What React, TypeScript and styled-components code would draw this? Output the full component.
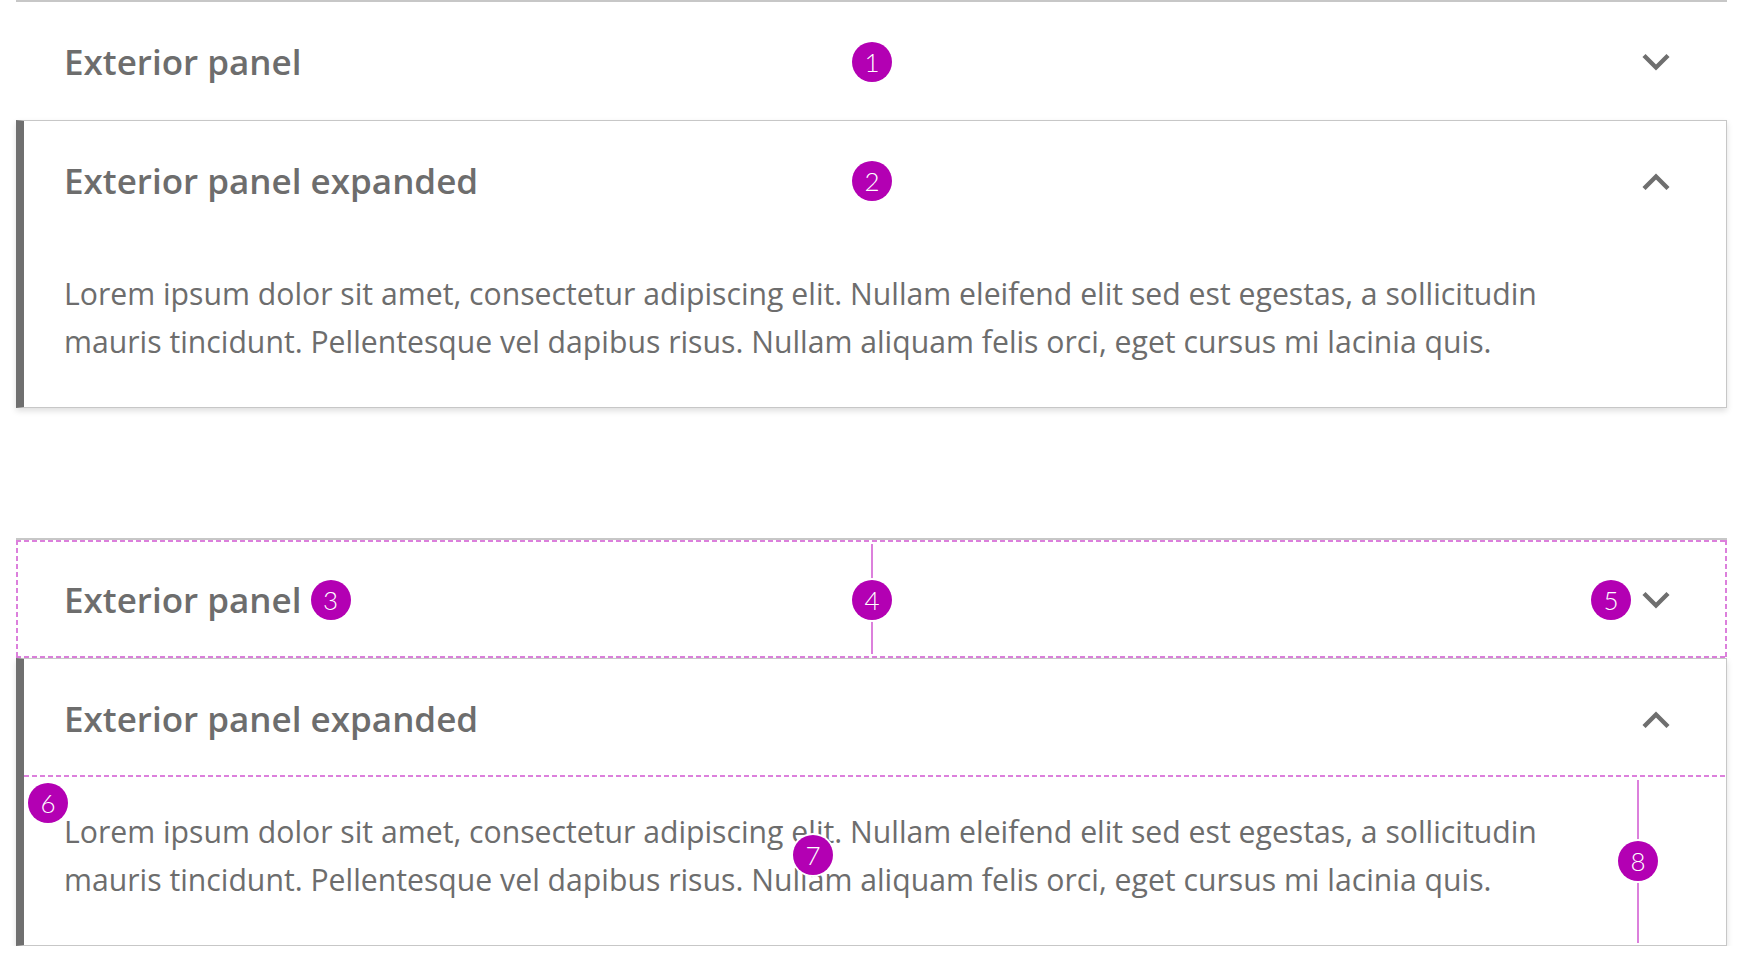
import styled, { createGlobalStyle, css } from "styled-components";

const GlobalStyle = createGlobalStyle`
  body {
    margin: 0;
    background: #ffffff;
    font-family: "Open Sans", "Liberation Sans", sans-serif;
  }
`

const pink = "#dc80dc";
const dashH = `repeating-linear-gradient(90deg, ${pink} 0 5px, transparent 5px 8px)`;
const dashV = `repeating-linear-gradient(180deg, ${pink} 0 5px, transparent 5px 8px)`;

const Page = styled.div`
  padding: 0 17px 0 16px;
  display: flex;
  flex-direction: column;
`
const Group = styled.div`
  display: flex;
  flex-direction: column;
  & + & {
    margin-top: 130px;
  }
`
const Item = styled.div<{ $expanded?: boolean }>`
  position: relative;
  background: #ffffff;
  ${(p) =>
    p.$expanded
      ? css`
          border: 1px solid #c7c7c7;
          border-left: 8px solid #6f6f6f;
          box-shadow: 0 3px 6px rgba(0, 0, 0, 0.13);
        `
      : css`
          border-top: 2px solid #c7c7c7;
        `}
`
const Header = styled.div<{ $expanded?: boolean; $outline?: boolean; $dashedBottom?: boolean }>`
  position: relative;
  display: flex;
  align-items: center;
  height: 118px;
  box-sizing: border-box;
  padding: 1px ${(p) => (p.$expanded ? 55 : 56)}px 0 ${(p) => (p.$expanded ? 40 : 48)}px;
  ${(p) =>
    p.$outline &&
    css`
      background:
        ${dashH} top left / 100% 2px no-repeat,
        ${dashH} bottom left / 100% 2px no-repeat,
        ${dashV} top left / 2px 100% no-repeat,
        ${dashV} top right / 2px 100% no-repeat;
    `}
  ${(p) =>
    p.$dashedBottom &&
    css`
      background: ${dashH} bottom left / 100% 2px no-repeat;
    `}
`
const Title = styled.h3`
  flex: 1;
  margin: 0;
  display: flex;
  align-items: center;
  gap: 9px;
  font-family: "Open Sans", "Liberation Sans", sans-serif;
  font-weight: 600;
  font-size: 35px;
  line-height: 40px;
  color: #6d6d6d;
`
const Toggle = styled.div`
  display: flex;
  align-items: center;
  gap: 10px;
`
const Body = styled.div`
  padding: 31px 60px 41px 40px;
  font-family: "Open Sans", "Liberation Sans", sans-serif;
  font-size: 30.2px;
  line-height: 48px;
  color: #6d6d6d;
`
const Badge = styled.span`
  width: 40px;
  height: 40px;
  flex: none;
  border-radius: 50%;
  background: #b300b3;
  color: #ffffff;
  display: inline-flex;
  align-items: center;
  justify-content: center;
  font-family: Lato, "Liberation Sans", sans-serif;
  font-weight: 300;
  font-size: 26px;
  line-height: 1;
  box-shadow: 0 0 0 2px #ffffff;
`
const Marker = styled(Badge)<{ $x: number; $y: number }>`
  position: absolute;
  left: ${(p) => p.$x}px;
  top: ${(p) => p.$y}px;
  transform: translate(-50%, -50%);
  z-index: 2;
`
const Guide = styled.div<{ $x: number; $top: number; $bottom: number }>`
  position: absolute;
  left: ${(p) => p.$x - 1}px;
  top: ${(p) => p.$top}px;
  bottom: ${(p) => p.$bottom}px;
  width: 2px;
  background: ${pink};
  z-index: 1;
`

function Chevron({ up }: { up?: boolean }) {
  return (
    <svg width="30" height="18" viewBox="0 0 30 18">
      <polyline
        points={up ? "3,16.5 15,4.5 27,16.5" : "3,2.5 15,14.5 27,2.5"}
        fill="none"
        stroke="#6f6f6f"
        strokeWidth="4.4"
      />
    </svg>
  );
}

const lorem1 =
  "Lorem ipsum dolor sit amet, consectetur adipiscing elit. Nullam eleifend elit sed est egestas, a sollicitudin";
const lorem2 = "mauris tincidunt. Pellentesque vel dapibus risus. Nullam aliquam felis orci, eget cursus mi lacinia quis.";

function App() {
  return (
    <>
      <GlobalStyle />
      <Page>
        <Group>
          <Item>
            <Header>
              <Title>Exterior panel</Title>
              <Chevron />
              <Marker $x={856} $y={60}>1</Marker>
            </Header>
          </Item>
          <Item $expanded>
            <Header $expanded>
              <Title>Exterior panel expanded</Title>
              <Chevron up />
              <Marker $x={848} $y={60}>2</Marker>
            </Header>
            <Body>
              {lorem1}
              <br />
              {lorem2}
            </Body>
          </Item>
        </Group>

        <Group>
          <Item>
            <Header $outline>
              <Title>
                Exterior panel
                <Badge>3</Badge>
              </Title>
              <Toggle>
                <Badge>5</Badge>
                <Chevron />
              </Toggle>
              <Guide $x={856} $top={4} $bottom={4} />
              <Marker $x={856} $y={60}>4</Marker>
            </Header>
          </Item>
          <Item $expanded>
            <Header $expanded $dashedBottom>
              <Title>Exterior panel expanded</Title>
              <Chevron up />
            </Header>
            <Body>
              {lorem1}
              <br />
              {lorem2}
            </Body>
            <Marker $x={24} $y={144}>6</Marker>
            <Marker $x={789} $y={196}>7</Marker>
            <Guide $x={1614} $top={121} $bottom={2} />
            <Marker $x={1614} $y={202}>8</Marker>
          </Item>
        </Group>
      </Page>
    </>
  );
}

export default App;
